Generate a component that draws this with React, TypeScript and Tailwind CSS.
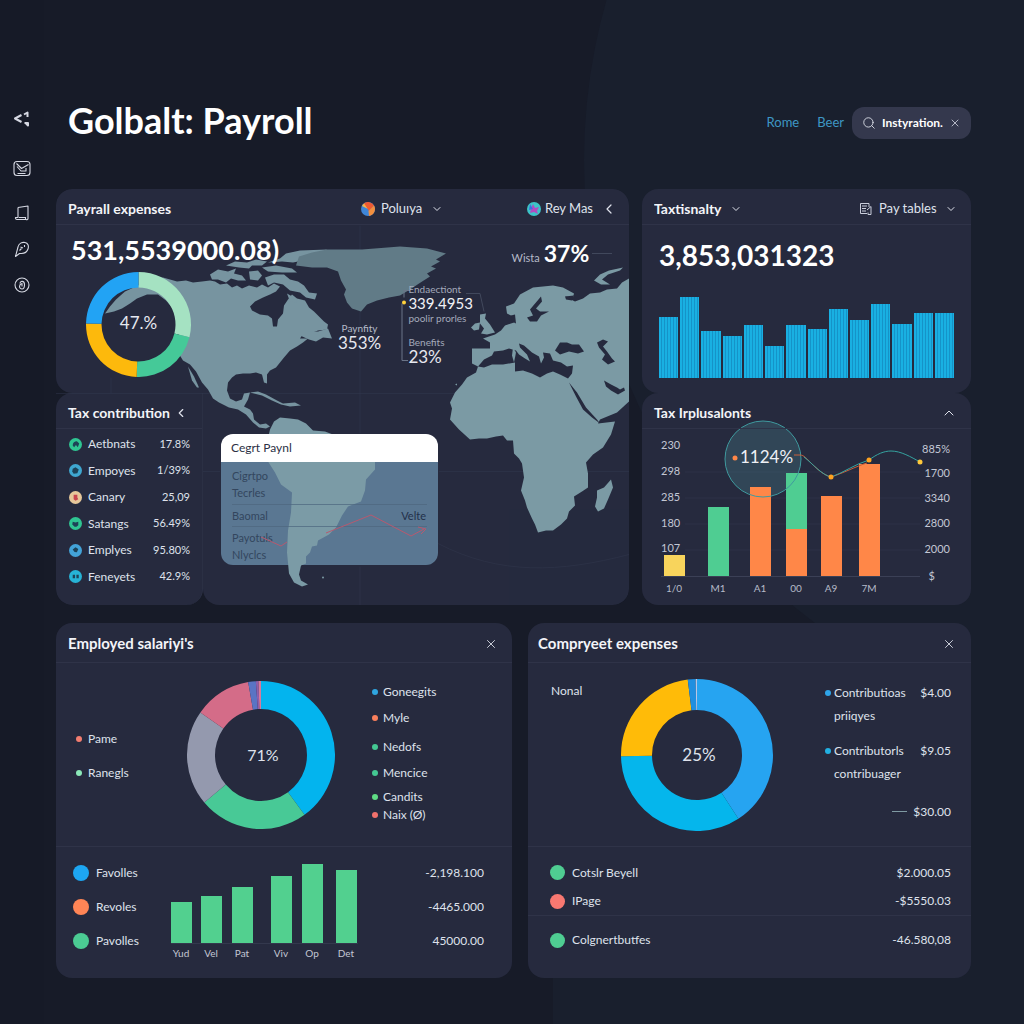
import React from "react";
import { ChevronDown, ChevronLeft, ChevronUp, Search, X } from "lucide-react";

const FONT = "font-['Lato','Noto_Sans',sans-serif]";

type Slice = { from: number; to: number; color: string };

function arc(c: number, r: number, inner: number, from: number, to: number) {
  const p = (rad: number, deg: number) => {
    const a = ((deg - 90) * Math.PI) / 180;
    return `${(c + rad * Math.cos(a)).toFixed(2)} ${(c + rad * Math.sin(a)).toFixed(2)}`;
  };
  const large = to - from > 180 ? 1 : 0;
  return `M${p(r, from)}A${r} ${r} 0 ${large} 1 ${p(r, to)}L${p(inner, to)}A${inner} ${inner} 0 ${large} 0 ${p(inner, from)}Z`;
}

function Donut({ size, inner, slices, label, className, textClass }: {
  size: number; inner: number; slices: Slice[]; label: string; className: string; textClass: string;
}) {
  const c = size / 2;
  return (
    <div className={`relative grid shrink-0 place-items-center ${className}`}>
      <svg viewBox={`0 0 ${size} ${size}`} className="absolute inset-0 h-full w-full" aria-hidden="true">
        {slices.map((s) => (
          <path key={s.from} d={arc(c, c, inner, s.from, s.to)} fill={s.color} />
        ))}
      </svg>
      <span className={`relative ${textClass}`}>{label}</span>
    </div>
  );
}

const payrollSlices: Slice[] = [
  { from: 0, to: 104, color: "#a5e2c2" },
  { from: 104, to: 182, color: "#45c998" },
  { from: 182, to: 271, color: "#fdb90c" },
  { from: 271, to: 360, color: "#22a3f4" },
];
const salarySlices: Slice[] = [
  { from: 0, to: 144, color: "#03b4ee" },
  { from: 144, to: 230, color: "#48c996" },
  { from: 230, to: 305, color: "#9499ae" },
  { from: 305, to: 350, color: "#d46c88" },
  { from: 350, to: 356, color: "#5a74c4" },
  { from: 356, to: 358, color: "#8d5fae" },
  { from: 358, to: 360, color: "#d77a9c" },
];
const companySlices: Slice[] = [
  { from: 0, to: 147, color: "#26a4f1" },
  { from: 147, to: 269, color: "#05b6ec" },
  { from: 269, to: 353, color: "#ffbb08" },
  { from: 353, to: 359, color: "#1f8fe0" },
  { from: 359, to: 360, color: "#b9c6e6" },
];

function WorldMap() {
  return (
    <svg viewBox="56 188 573 417" preserveAspectRatio="xMidYMid slice" className="pointer-events-none absolute inset-0 z-0 h-full w-full" aria-hidden="true">
      <g stroke="#343a50" strokeWidth="1" opacity="0.45" fill="none">
        <path d="M360 225V433M360 566V605M203 471H220M439 471H629M56 393H629M111 377V393" />
        <path d="M438 543C500 575 560 572 629 554" />
      </g>
      <g fill="#7794a0">
        <path d="M105 313L114 311 122 308 130 303 137 298 147 294 158 294 166 300 173 308 178 318 179 330 179 342 178 352 183 360 190 364 196 371 202 382 208 389 213 398 219 402 229 407 238 409 246 414 253 422 259 427 266 428 270 426 266 423 260 424 254 419 253 413 250 409 244 406 248 399 250 392 244 393 242 399 236 401 230 398 227 390 228 382 232 377 236 374 243 373 250 373 256 372 262 374 264 382 267 383 267 374 270 370 276 367 280 362 284 357 290 350 297 346 303 342 308 338 300 338 302 335 310 333 318 330 327 329 328 324 324 321 318 315 314 311 309 307 305 300 297 298 292 294 288 299 284 305 283 313 278 319 277 326 273 326 272 318 268 315 260 314 252 310 250 306 255 301 263 297 270 294 276 291 280 286 274 283 268 287 262 284 257 287 249 285 242 288 237 285 232 287 227 283 220 284 215 281 210 280 202 281 193 282 186 280 177 281 170 279 163 277 150 280 138 285 125 291 116 299 110 306Z" />
        <path d="M188 366L194 376 199 387 197 387 192 380Z" />
        <path d="M300 335L308 331 318 331 328 328 332 338 323 337 316 341 309 339Z" />
        <path d="M210 274L218 269 228 271 236 268 234 273 242 275 246 280 238 280 231 278 226 282 218 279 212 279Z" />
        <path d="M226 265L235 261 247 262 256 259 267 261 262 265 252 265 249 268 239 267Z" />
        <path d="M262 267L276 265 292 268 297 272 282 272 268 271Z" />
        <path d="M249 271L258 270 262 275 258 280 250 279Z" />
        <path d="M265 277L274 274 284 274 290 279 298 281 304 285 309 292 317 293 315 299 306 297 300 292 290 290 283 284 274 282 268 285Z" />
        <path d="M287 293L294 297 298 302 290 301Z" />
        <path d="M268 262L280 258 286 253 300 250 327 249 321 253 311 255 303 260 293 262 282 261Z" />
        <path d="M250 392L258 391 266 394 277 400 283 403 295 402 301 405 290 406 281 404 272 400 262 395Z" />
      </g>
      <path fill="#7b9ba6" d="M270 429L274 421 280 417 290 418 298 419 306 423 313 430 325 431 333 434 345 440 352 448 364 454 375 461 375 469 366 479 365 490 361 501 348 506 342 515 336 527 329 534 318 540 317 545 312 546 310 552 306 556 306 563 301 565 299 574 301 580 308 584 302 586 294 582 289 573 287 552 288 530 291 512 292 492 281 484 275 472 268 461 266 447Z" />
      <path fill="#617b87" d="M296 265L299 256 312 252 327 249 362 249 400 246 427 248 446 253 436 259 440 261 431 266 436 268 427 273 430 276 419 283 410 289 400 295 389 297 377 300 367 304 361 311 352 308 347 302 344 294 346 289 341 280 338 271 327 267 312 267Z" />
      <g fill="#7b9aa4">
        <path d="M629 278L622 282 617 288 607 289 600 292 590 293 583 298 575 301 565 296 573 297 574 293 563 287 553 285 543 286 533 287 520 294 514 303 506 306 507 313 513 316 514 322 505 325 501 330 495 334 489 336 483 338 490 342 490 348 472 348 472 363 478 366 476 372 467 377 462 384 455 392 450 402 452 408 450 419 459 429 470 439 479 438 487 438 496 436 503 435 507 440 513 440 514 453 519 458 522 463 524 477 521 490 525 500 527 507 532 518 535 524 538 532 546 530 553 530 561 524 567 518 569 511 575 505 574 496 582 491 588 487 588 473 586 462 593 454 603 447 611 434 615 421 598 423 600 419 617 412 629 401Z" />
        <path d="M480 314L486 313 485 318 490 324 495 332 487 334 481 333 484 328 480 323Z" />
        <path d="M471 327L475 323 480 322 479 329 474 330Z" />
        <path d="M611 479L613 487 608 499 604 508 598 511 595 506 597 497 597 490 604 487Z" />
        <path d="M594 280L600 274 609 270 623 267 620 270 608 274 602 279 610 284 601 284Z" />
        <path d="M455 384L457 383 457 385Z" />
      </g>
      <g fill="#262a3e">
        <path d="M478 366L484 359 492 355 494 351 503 350 509 348 516 350 519 354 525 358 530 361 527 354 520 347 519 343 524 345 532 352 539 356 541 363 544 357 543 352 550 353 553 360 561 362 567 366 573 365 572 373 568 378 560 374 553 371 547 373 540 377 532 373 523 370 515 371 515 362 503 364 492 364 484 367Z" />
        <path d="M513 347L516 352 514 362 512 355Z" fill="#7b9aa4" />
        <path d="M541 296L530 309 533 315 527 317 530 321 537 321 541 315 549 311 540 311 536 308 542 301Z" />
        <path d="M511 315L515 314 516 323 512 321Z" />
        <path d="M555 350L560 342 567 342 572 344 579 344 584 351 578 353 569 351 560 354Z" />
        <path d="M597 342L603 339 608 341 603 346 607 351 612 358 615 361 608 364 602 359 605 354 599 347Z" />
        <path d="M569 382L577 392 586 407 597 419 600 423 592 417 583 409 576 396Z" />
        <path d="M604 380L611 384 617 387 620 389 624 387 625 390 618 394 611 390 606 386Z" />
        <path d="M565 296L574 295 572 300 566 299Z" />
      </g>
      <path d="M466 293H480L484 311M592 253H612" stroke="#41485c" fill="none" />
      <path d="M402 303V360H408M404 290V297M404 290H410" stroke="#6b7488" fill="none" />
      <circle cx="404" cy="302" r="2" fill="#ffd23c" />
      <circle cx="323" cy="577" r="1" fill="#7b9aa4" />
    </svg>
  );
}

function PanelHeader({ title, children, tall }: { title?: string; children?: React.ReactNode; tall?: boolean }) {
  return (
    <header className={`relative z-10 flex items-center justify-between border-b border-[#2f3348] pr-3.5 pl-3 ${tall ? "h-10 pt-0.5" : "h-9 pt-1"}`}>
      {title && <h2 className={`font-bold text-[#f3f4f8] ${tall ? "text-[15px]" : "text-sm"}`}>{title}</h2>}
      {children}
    </header>
  );
}

function Picker({ name, value, bold }: { name: string; value: string; bold?: boolean }) {
  return (
    <span className="relative inline-flex items-center">
      <select aria-label={name} className={`appearance-none bg-transparent pr-5 outline-none ${bold ? "text-sm font-bold text-[#f3f4f8]" : "text-[13px] text-[#dfe2ec]"}`}>
        <option>{value}</option>
      </select>
      <ChevronDown className="pointer-events-none absolute right-0 h-3 w-3 text-[#dfe2ec]" />
    </span>
  );
}

function IconButton({ label, children }: { label: string; children: React.ReactNode }) {
  return (
    <button type="button" aria-label={label} className="grid place-items-center text-[#dfe2ec]">
      {children}
    </button>
  );
}

const navIcons = [
  {
    label: "Share", cls: "h-5 w-5 mb-[30px]",
    art: (
      <>
        <path d="M9.500 6L3 9.500 9.500 13" strokeWidth="2" />
        <path d="M12 5.500l3.500-2v4.500M12.500 14h3.500v2.500l-2-2" strokeWidth="2" />
      </>
    ),
  },
  {
    label: "Mail", cls: "h-5 w-5 mb-6",
    art: (
      <>
        <rect x="2" y="2.500" width="16" height="14" rx="3" />
        <path d="M4.500 4.500L9.500 9.500l7-4M5 7.500l4 4.500h5v-3M5.500 14.500h8" />
      </>
    ),
  },
  {
    label: "Documents", cls: "h-5 w-5 mb-4",
    art: <path d="M6 4.500l10-1.500v12.500c0 1-1 1.500-2 1H5c-1 0-1.800-.8-1.500-2h2.500V4.500M7 14.500h7M13.500 16.500v-2.500" />,
  },
  {
    label: "Messages", cls: "h-5 w-5 mb-4",
    art: (
      <>
        <path d="M3.500 17.500L6 8c.8-3.500 4-5 7-4.500s4 3.500 3 6.500-3.500 4.500-6.500 4.500H7.500L3.500 17.500z" />
        <path d="M8.500 8l2.500 1M12.500 6v2M7.500 11.500l2-2" />
      </>
    ),
  },
  {
    label: "Billing", cls: "h-5 w-5",
    art: (
      <>
        <circle cx="10" cy="10" r="7" />
        <path d="M8 8.500c0-3 4.500-3 4.500 1s-1.500 4.500-2.500 4.500-2.500-1-2.500-2.500S8.500 9 10 8.500v3" />
      </>
    ),
  },
];

const contributions = [
  { name: "Aetbnats", value: "17.8%", tone: "#2fc592", mark: "M4 8c0-3 2-4.500 4.500-4.500L11 6l-1.500 4-2-2.500L5.500 10z" },
  { name: "Empoyes", value: "1/39%", tone: "#3fa7d0", mark: "M4 5l3-1.500L10.500 6 9 10 5 10.500 3.500 8z" },
  { name: "Canary", value: "25,09", tone: "#e6c79a", mark: "M5 4h4v3L10 9 7 10.500 5 9z" },
  { name: "Satangs", value: "56.49%", tone: "#2fc592", mark: "M4 5l3 1 3-1v4L8 10.500H6L3.500 8z" },
  { name: "Emplyes", value: "95.80%", tone: "#43a3d8", mark: "M4 6l3-2.500 3 2L8.500 9 6 8.500z" },
  { name: "Feneyets", value: "42.9%", tone: "#27b3d6", mark: "M4 5h2.500v4H4zM8 5h2.500v4H8z" },
];

const popupLabels = [
  { text: "Cigrtpo", cls: "pt-[5px]" },
  { text: "Tecrles", cls: "pb-[3px]" },
  { text: "Baomal", cls: "border-t border-[#4d677f]/70 py-0.5" },
  { text: "Payotuls", cls: "border-t border-[#4d677f]/70 pt-0.5" },
  { text: "Nlyclcs", cls: "" },
];

const taxBars = [61, 81, 47, 42, 53, 32, 53, 49, 69, 58, 74, 54, 65, 65];

const impactBars = [
  { x: 664, y: 555, c: "#f8d45c", t: "1/0" },
  { x: 708, y: 507, c: "#4fcd92", t: "M1" },
  { x: 750, y: 487, c: "#ff8748", t: "A1" },
  { x: 786, y: 529, c: "#ff8748", t: "00" },
  { x: 821, y: 496, c: "#ff8748", t: "A9" },
  { x: 859, y: 464, c: "#ff8748", t: "7M" },
];

const salaryLegend = [
  { t: "Goneegits", c: "bg-[#2fa5e0]", h: "h-[26px]" },
  { t: "Myle", c: "bg-[#f97f5c]", h: "h-[26px]" },
  { t: "Nedofs", c: "bg-[#44c893]", h: "h-8" },
  { t: "Mencice", c: "bg-[#44c893]", h: "h-5" },
  { t: "Candits", c: "bg-[#5fdc85]", h: "h-7" },
  { t: "Naix (Ø)", c: "bg-[#f0716c]", h: "h-2" },
];

const salaryBars = [
  { x: 171, y: 902, t: "Yud" },
  { x: 201, y: 896, t: "Vel" },
  { x: 232, y: 887, t: "Pat" },
  { x: 271, y: 876, t: "Viv" },
  { x: 302, y: 864, t: "Op" },
  { x: 336, y: 870, t: "Det" },
];

const CARD = "bg-[#262a3e]";

export default function App() {
  return (
    <div className={`relative flex min-h-screen overflow-hidden bg-[#171b28] text-[#dfe2ec] ${FONT}`}>
      <div className="pointer-events-none absolute -top-[420px] left-[57%] h-[1160px] w-[1160px] rounded-full bg-[#191f2d]" />
      <div className="pointer-events-none absolute bottom-0 left-[54%] h-[400px] w-1/2 bg-[#191f2d]" />

      <nav aria-label="Main" className="relative flex w-11 shrink-0 flex-col items-center bg-[#161a27] pt-[109px]">
        {navIcons.map((n) => (
          <a key={n.label} href="#" aria-label={n.label} className={`block text-[#d5d8e2] ${n.cls}`}>
            <svg viewBox="0 0 20 20" className="h-full w-full" fill="none" stroke="currentColor" strokeWidth="1.100" strokeLinejoin="round">
              {n.art}
            </svg>
          </a>
        ))}
      </nav>

      <main className="relative min-w-0 flex-1 pr-[53px] pb-[46px] pl-3">
        <header className="flex h-[189px] items-start justify-between pt-[100px]">
          <h1 className="pl-3 text-[36px] leading-10 font-bold text-white">Golbalt: Payroll</h1>
          <div className="mt-[7px] flex items-center text-[13px] text-[#3e97c4]">
            <a href="#" className="mr-[18px]">Rome</a>
            <a href="#" className="mr-2">Beer</a>
            <label className="flex h-8 w-[119px] items-center rounded-xl bg-[#34384d] pr-2.5 pl-2.5">
              <Search className="h-3.5 w-3.5 shrink-0 text-[#dfe2ec]" strokeWidth={1.5} />
              <input aria-label="Search" defaultValue="Instyration." className="mr-1 ml-1.5 w-0 min-w-0 flex-1 bg-transparent text-xs font-bold text-white outline-none" />
              <IconButton label="Clear search"><X className="h-3 w-3" strokeWidth={1.5} /></IconButton>
            </label>
          </div>
        </header>

        <div className="grid grid-cols-[573fr_329fr] gap-[13px]">
          <section className="relative grid grid-cols-[147px_1fr] grid-rows-[auto_1fr] overflow-hidden rounded-2xl">
            <div className={`col-span-2 rounded-t-2xl rounded-bl-2xl ${CARD}`}>
              <header className="relative z-10 flex h-9 items-center border-b border-[#2f3348] pt-1 pr-3 pl-3">
                <h2 className="w-[53%] text-sm font-bold text-[#f3f4f8]">Payrall expenses</h2>
                <div className="ml-0.5 flex items-center gap-1.5">
                  <svg viewBox="0 0 14 14" className="h-3.5 w-3.5" aria-hidden="true">
                    <circle cx="7" cy="7" r="7" fill="#3f86d8" />
                    <path d="M7 7L1 4A7 7 0 0 1 4 .7z" fill="#f3b24d" />
                    <path d="M3 1.200A7 7 0 0 1 13 3.500L8 9z" fill="#ee5a32" />
                    <path d="M13 3.500A7 7 0 0 1 8 14L7.500 9z" fill="#f28f3e" />
                  </svg>
                  <Picker name="Policy" value="Poluıya" />
                </div>
                <div className="ml-auto flex items-center gap-1">
                  <svg viewBox="0 0 14 14" className="h-3.5 w-3.5" aria-hidden="true">
                    <circle cx="7" cy="7" r="7" fill="#3cc4c8" />
                    <path d="M6 2l2 4 4-1-2 4 1 3-4-2-4 1 1-4z" fill="#b14bc0" />
                    <path d="M3 2l3 5-4 1z" fill="#3a6fe0" />
                  </svg>
                  <span className="text-[13px]">Rey Mas</span>
                  <span className="ml-1"><IconButton label="Previous"><ChevronLeft className="h-4 w-4" strokeWidth={1.800} /></IconButton></span>
                </div>
              </header>
              <div className="relative z-10 px-[15px] pt-2 pb-4">
                <p className="text-[27px] leading-[34px] font-bold text-white">531,5539000.08)</p>
                <Donut className="mt-[5px] ml-[15px] h-[105px] w-[105px]" size={105} inner={37} slices={payrollSlices} label="47.%" textClass="pb-1 text-[17px] text-[#e6e8f0]" />
              </div>
            </div>

            <div className={`flex flex-col rounded-l-2xl rounded-br-2xl border-r border-[#2b3044] ${CARD}`}>
              <PanelHeader title="Tax contribution">
                <IconButton label="Collapse"><ChevronLeft className="h-3.5 w-3.5" /></IconButton>
              </PanelHeader>
              <ul className="relative z-10 flex flex-1 flex-col pt-0.5 pr-3 pb-[15px] pl-[13px]">
                {contributions.map((c) => (
                  <li key={c.name} className="flex min-h-[26px] flex-1 items-center text-xs">
                    <svg viewBox="0 0 14 14" className="mr-1.5 h-[13px] w-[13px]" aria-hidden="true">
                      <circle cx="7" cy="7" r="7" fill={c.tone} />
                      <path d={c.mark} fill={c.name === "Canary" ? "#c8454f" : "#1d4257"} />
                    </svg>
                    <span>{c.name}</span>
                    <span className="ml-auto text-[11px]">{c.value}</span>
                  </li>
                ))}
              </ul>
            </div>

            <div className={`rounded-b-2xl pb-10 ${CARD}`}>
              <article className="mt-[41px] ml-[18px] w-[217px] overflow-hidden rounded-xl">
                <h3 className="relative z-10 h-7 bg-white pl-2.5 text-xs leading-7 text-[#2b3044]">Cegrt Paynl</h3>
                <div className="h-[103px] bg-[#5a7792]">
                  <div className="relative z-10 h-full px-[11px] text-[11px] leading-[17px] text-[#33465e]">
                    {popupLabels.map((l) => (
                      <p key={l.text} className={l.cls}>{l.text}</p>
                    ))}
                    <span className="absolute top-[45px] right-3 text-[#22304a]">Velte</span>
                    <svg viewBox="0 0 217 103" className="absolute inset-0 h-full w-full" fill="none" stroke="#b7596f" aria-hidden="true">
                      <path d="M40 75L60 84 66 80M105 71L150 53 190 74 203 67M197 65l8 2-5 5" />
                    </svg>
                  </div>
                </div>
              </article>
            </div>

            <WorldMap />

            <p className="absolute top-[50px] left-[79.500%] z-10 flex items-baseline gap-1 text-[#b5bac8]">
              <span className="text-[11px]">Wista</span>
              <span className="text-[23px] leading-7 font-bold text-white">37%</span>
            </p>
            <p className="absolute top-[133px] left-[49.200%] z-10 flex flex-col items-center text-[10px] leading-[13px] text-[#b5bac8]">
              Paynfity
              <span className="text-[17px] leading-4 text-[#e6e8f0]">353%</span>
            </p>
            <div className="absolute top-[94px] left-[61.500%] z-10 text-[10px] leading-3 text-[#a3a9ba]">
              <p>Endaectiont</p>
              <p className="text-[15px] leading-4 text-[#f0f1f6]">339.4953</p>
              <p className="leading-[14px]">poolir prorles</p>
              <p className="mt-[11px]">Benefits</p>
              <p className="text-[17px] leading-[18px] text-[#e6e8f0]">23%</p>
            </div>
          </section>

          <div className="flex flex-col">
            <section className={`rounded-2xl ${CARD}`}>
              <PanelHeader>
                <Picker name="Tax view" value="Taxtisnalty" bold />
                <div className="flex items-center gap-1.5">
                  <svg viewBox="0 0 14 14" className="h-3.5 w-3.5" fill="none" stroke="#c9cddb" aria-hidden="true">
                    <path d="M10 5V1.500H1.500v10H8M3 4h5M3 6.500h4M3 9h4M8 8l4-3.500v8M9 10.500v2h3" />
                  </svg>
                  <Picker name="Pay tables" value="Pay tables" />
                </div>
              </PanelHeader>
              <div className="px-[17px] pb-[15px]">
                <p className="pt-[13px] text-[28px] leading-[34px] font-bold text-white">3,853,031323</p>
                <div className="mt-[25px] flex h-[81px] items-end gap-[2px]">
                  {taxBars.map((h, i) => (
                    <div
                      key={i}
                      className="flex-1 bg-[repeating-linear-gradient(90deg,#19b0e2_0px,#19b0e2_2px,#1593c8_2px,#1593c8_3px)]"
                      style={{ height: `${h}px` }}
                    />
                  ))}
                </div>
              </div>
            </section>

            <section className={`rounded-2xl ${CARD}`}>
              <PanelHeader title="Tax Irplusalonts">
                <IconButton label="Collapse"><ChevronUp className="h-4 w-4" strokeWidth={1.500} /></IconButton>
              </PanelHeader>
              <svg viewBox="642 429 329 176" className="block w-full overflow-visible" role="img" aria-label="Tax bars by month">
                <g stroke="#2c3146">
                  <path d="M685 472H920M685 498H920M685 524H920M685 550H920" />
                  <path d="M661 576.500H920" stroke="#3b4056" />
                </g>
                <circle cx="763" cy="459" r="38" fill="#4f8f9c" fillOpacity="0.28" />
                {impactBars.map((b) => (
                  <g key={b.x}>
                    <rect x={b.x} y={b.y} width="21" height={576 - b.y} fill={b.c} />
                    <text x={b.x + 10} y="592" textAnchor="middle" fontSize="10" fill="#b5bac8">{b.t}</text>
                  </g>
                ))}
                <rect x="786" y="473" width="21" height="56" fill="#4fcd92" />
                <circle cx="763" cy="459" r="38" fill="none" stroke="#3f9a9f" />
                <path d="M794 455h6c4 0 7 4 11 8 7 7 13 12 20 14 10-3 26-11 36-14" fill="none" stroke="#c9603c" />
                <path d="M804 457c10 8 18 18 27 20 12-4 24-13 38-17 8-6 15-9 22-9 10 0 20 6 29 11" fill="none" stroke="#35a3a0" />
                <circle cx="735" cy="458" r="2.500" fill="#ff8748" />
                <circle cx="831" cy="477" r="2.500" fill="#ffa31f" />
                <circle cx="869" cy="460" r="2.500" fill="#ffa31f" />
                <circle cx="920" cy="462" r="2.500" fill="#ffc93c" />
                <g fontSize="11" fill="#c3c7d4">
                  <text x="661" y="449">230</text>
                  <text x="661" y="475">298</text>
                  <text x="661" y="501">285</text>
                  <text x="661" y="527">180</text>
                  <text x="661" y="552">107</text>
                </g>
                <g fontSize="11" fill="#c3c7d4" textAnchor="end">
                  <text x="950" y="453">885%</text>
                  <text x="950" y="477">1700</text>
                  <text x="950" y="502">3340</text>
                  <text x="950" y="527">2800</text>
                  <text x="950" y="553">2000</text>
                  <text x="935" y="580">$</text>
                </g>
                <text x="740" y="463" fontSize="17" fill="#eef0f5">1124%</text>
              </svg>
            </section>
          </div>
        </div>

        <div className="mt-[18px] grid grid-cols-[456fr_443fr] gap-4">
          <section className={`rounded-2xl ${CARD}`}>
            <PanelHeader title="Employed salariyi's" tall>
              <IconButton label="Close"><X className="h-3.5 w-3.5" strokeWidth={1.500} /></IconButton>
            </PanelHeader>
            <div className="flex h-[184px] border-b border-[#2f3348] pl-5 text-xs">
              <ul className="w-[111px] shrink-0 pt-[59px]">
                <li className="flex h-[34px] items-center gap-1.5"><i className="h-1.5 w-1.5 rounded-full bg-[#f27d70]" />Pame</li>
                <li className="flex h-[34px] items-center gap-1.5"><i className="h-1.5 w-1.5 rounded-full bg-[#8be8b8]" />Ranegls</li>
              </ul>
              <Donut className="mt-[18px] h-[148px] w-[148px]" size={148} inner={46} slices={salarySlices} label="71%" textClass="pl-1 text-base" />
              <ul className="ml-[37px] pt-4">
                {salaryLegend.map((l) => (
                  <li key={l.t} className={`flex items-center gap-[5px] ${l.h}`}>
                    <i className={`h-1.5 w-1.5 rounded-full ${l.c}`} />{l.t}
                  </li>
                ))}
              </ul>
            </div>
            <div className="flex h-[131px] pr-7 pl-[17px] text-xs">
              <ul className="w-[98px] shrink-0 pt-[9px]">
                <li className="flex h-[34px] items-center gap-[7px]"><i className="h-4 w-4 rounded-full bg-[#1da6f2]" />Favolles</li>
                <li className="flex h-[34px] items-center gap-[7px]"><i className="h-4 w-4 rounded-full bg-[#ff8556]" />Revoles</li>
                <li className="flex h-[34px] items-center gap-[7px]"><i className="h-4 w-4 rounded-full bg-[#4bcb93]" />Pavolles</li>
              </ul>
              <svg viewBox="171 847 188 131" className="h-[131px] w-[188px] shrink-0" role="img" aria-label="Salary by month">
                <path d="M171 943.500H358" stroke="#33384d" />
                {salaryBars.map((b) => (
                  <g key={b.x}>
                    <rect x={b.x} y={b.y} width="21" height={943 - b.y} fill="#52d08f" />
                    <text x={b.x + 10} y="957" textAnchor="middle" fontSize="10" fill="#c3c7d4">{b.t}</text>
                  </g>
                ))}
              </svg>
              <ul className="ml-auto pt-[9px] text-right">
                <li className="h-[34px] leading-[34px]">-2,198.100</li>
                <li className="h-[34px] leading-[34px]">-4465.000</li>
                <li className="h-[34px] leading-[34px]">45000.00</li>
              </ul>
            </div>
          </section>

          <section className={`rounded-2xl ${CARD}`}>
            <header className="flex h-10 items-center justify-between border-b border-[#2f3348] pt-0.5 pr-[15px] pl-2.5">
              <h2 className="text-[15px] font-bold text-[#f3f4f8]">Compryeet expenses</h2>
              <IconButton label="Close"><X className="h-3.5 w-3.5" strokeWidth={1.500} /></IconButton>
            </header>
            <div className="flex h-[184px] border-b border-[#2f3348] pr-5 pl-[23px] text-xs">
              <p className="w-[70px] shrink-0 pt-5">Nonal</p>
              <Donut className="mt-4 h-[152px] w-[152px]" size={152} inner={45} slices={companySlices} label="25%" textClass="pl-1 text-[17px]" />
              <dl className="ml-auto w-[126px] pt-[18px] leading-[23px]">
                <div className="mb-3 flex justify-between">
                  <dt className="flex w-[86px] gap-[3px]"><i className="mt-[9px] h-1.5 w-1.5 shrink-0 rounded-full bg-[#2fa5ea]" /><span>Contributioas priiqyes</span></dt>
                  <dd>$4.00</dd>
                </div>
                <div className="mb-[15px] flex justify-between">
                  <dt className="flex w-[86px] gap-[3px]"><i className="mt-[9px] h-1.5 w-1.5 shrink-0 rounded-full bg-[#22b0e2]" /><span>Contributorls contribuager</span></dt>
                  <dd>$9.05</dd>
                </div>
                <div className="flex items-center justify-end gap-1.5">
                  <dt aria-label="Total" className="h-px w-[15px] bg-[#7f9aa3]" />
                  <dd>$30.00</dd>
                </div>
              </dl>
            </div>
            <ul className="h-[131px] pt-[11px] text-xs">
              <li className="flex h-[29px] items-center gap-[7px] pr-5 pl-[22px]"><i className="h-[15px] w-[15px] rounded-full bg-[#4fcd92]" />Cotslr Beyell<span className="ml-auto">$2.000.05</span></li>
              <li className="flex h-[29px] items-center gap-[7px] border-b border-[#2f3348] pr-5 pl-[22px]"><i className="h-[15px] w-[15px] rounded-full bg-[#f87871]" />IPage<span className="ml-auto">-$5550.03</span></li>
              <li className="flex h-12 items-center gap-[7px] pr-5 pl-[22px]"><i className="h-[15px] w-[15px] rounded-full bg-[#4fcd92]" />Colgnertbutfes<span className="ml-auto">-46.580,08</span></li>
            </ul>
          </section>
        </div>
      </main>
    </div>
  );
}
